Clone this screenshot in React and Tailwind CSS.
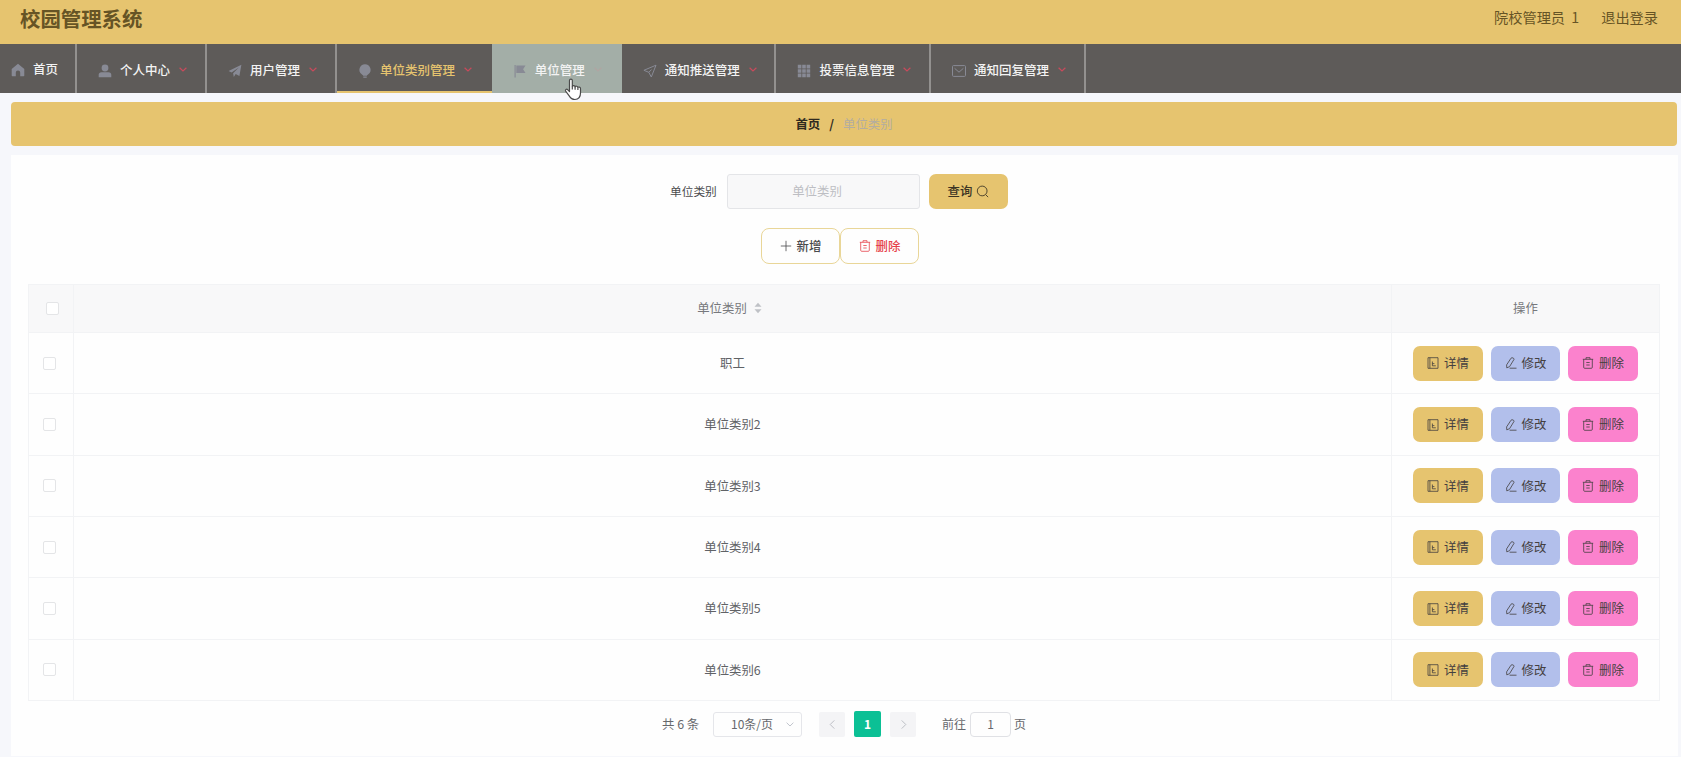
import React from "react";

const menus = [
  { name: "个人中心", icon: "user" },
  { name: "用户管理", icon: "plane" },
  { name: "单位类别管理", icon: "bulb", active: true },
  { name: "单位管理", icon: "flag", hover: true },
  { name: "通知推送管理", icon: "send" },
  { name: "投票信息管理", icon: "grid" },
  { name: "通知回复管理", icon: "mail" },
];

const rows = ["职工", "单位类别2", "单位类别3", "单位类别4", "单位类别5", "单位类别6"];

const NavIcon = ({ name }) => {
  const solid = { width: 14, height: 14, viewBox: "0 0 14 14", fill: "currentColor" };
  const line = {
    width: 14,
    height: 14,
    viewBox: "0 0 14 14",
    fill: "none",
    stroke: "currentColor",
    strokeWidth: 1,
    strokeLinejoin: "round",
  };

  switch (name) {
    case "home":
      return (
        <svg {...solid}>
          <path d="M7 .8 13.3 6v6.6a.7.7 0 0 1-.7.7H9.2V9.6a2.2 2.2 0 0 0-4.4 0v3.7H1.4a.7.7 0 0 1-.7-.7V6z" />
        </svg>
      );
    case "user":
      return (
        <svg {...solid}>
          <circle cx="7" cy="4" r="3.4" />
          <path d="M.7 13.2v-2.4c0-1.6 1-2.6 2.8-2.6h7c1.8 0 2.8 1 2.8 2.6v2.4z" />
        </svg>
      );
    case "plane":
      return (
        <svg {...solid}>
          <path d="M13.4.8 11.4 12 7.7 10 5.8 13 5.1 9.2 10.8 3.5 3.6 8.4.6 7.1z" />
        </svg>
      );
    case "bulb":
      return (
        <svg {...solid}>
          <path d="M7 .2a5.6 5.6 0 0 0-3.3 10.1c.8.6 1.3.8 1.3 1.5h4c0-.7.5-.9 1.3-1.5A5.6 5.6 0 0 0 7 .2zM5.3 12.5h3.4v1.3H5.3z" />
        </svg>
      );
    case "flag":
      return (
        <svg {...solid}>
          <path d="M1.5 1h1.2v12.5H1.5zM3.3 1.5h9.2l-2.4 3.7 2.4 3.7H3.3z" />
        </svg>
      );
    case "send":
      return (
        <svg {...line}>
          <path d="M13 1.2.9 6.3l4.9 2L8.3 13z" />
          <path d="M5.8 8.3 8.6 5.5" />
        </svg>
      );
    case "grid":
      return (
        <svg {...solid}>
          <path d="M.8.8h3.6v3.6H.8zM5.2.8h3.6v3.6H5.2zM9.6.8h3.6v3.6H9.6zM.8 5.2h3.6v3.6H.8zM5.2 5.2h3.6v3.6H5.2zM9.6 5.2h3.6v3.6H9.6zM.8 9.6h3.6v3.6H.8zM5.2 9.6h3.6v3.6H5.2zM9.6 9.6h3.6v3.6H9.6z" />
        </svg>
      );
    default:
      return (
        <svg {...line}>
          <rect x=".5" y="1.6" width="13" height="10.8" rx="1" />
          <path d="m2.6 4.3 4.4 3.9 4.4-3.9" />
        </svg>
      );
  }
};

const Icon = ({ size = 12, children }) => (
  <svg
    width={size}
    height={size}
    viewBox="0 0 12 12"
    fill="none"
    stroke="currentColor"
    strokeWidth=".8"
    className="shrink-0"
  >
    {children}
  </svg>
);

const Trash = () => (
  <Icon>
    <path d="M.8 2.3h10.4M1.7 2.3v8q0 1 1 1h6.6q1 0 1-1v-8M4 2.2V.7h4v1.5M4.3 5.5h3.4M4.3 8h3.4" />
  </Icon>
);

const Detail = () => (
  <Icon>
    <path d="M1 .7h10v10.6H1zM2.9.7v10.6M5.4 4.5v4.3h3.4M5.4 6.6h2" />
  </Icon>
);

const Pen = () => (
  <Icon>
    <path d="M6 1.2c.8-1 3.3-.2 3 1.2L4.600 9.600l-2.800 1.300-.2-3zM4.600 11.200h6.900" />
  </Icon>
);

const Checkbox = () => (
  <span className="block size-[13px] rounded-[2px] border border-[#e4e5e7] bg-white" />
);

const actionClass =
  "flex h-[35px] w-[69.5px] items-center justify-center gap-[5px] rounded-[7px] text-[12.4px] text-[#44403f]";

const Navbar = () => (
  <nav className="flex h-[49px] bg-[#5e5b59] text-[12.5px] font-medium text-[#f3f3f3]">
    <div className="flex w-[77px] items-center border-r-2 border-[#93918f] pl-[11px] pt-[1px]">
      <span className="mr-2 mt-[2px] text-[#888a95]">
        <NavIcon name="home" />
      </span>
      首页
    </div>
    {menus.map((m) => (
      <div
        key={m.name}
        className={`relative flex items-center pl-[21px] pt-[4px] ${
          m.name.length > 4 ? "w-[154.7px]" : "w-[130px]"
        } ${m.hover ? "bg-[#a3aea7]" : m.active ? "text-[#e6c46f]" : "border-r-2 border-[#93918f]"}`}
      >
        <span className="mr-2 text-[#888a95]">
          <NavIcon name={m.icon} />
        </span>
        <span className="whitespace-nowrap">{m.name}</span>
        <svg
          width="8"
          height="5"
          viewBox="0 0 8 5"
          fill="none"
          stroke={m.hover ? "#b0a5a2" : "#c94a5c"}
          strokeWidth="1.2"
          className="mb-[3px] ml-[9px] shrink-0"
        >
          <path d="m.6.7 3.4 3.3L7.4.7" />
        </svg>
        {m.active && <span className="absolute inset-x-0 bottom-0 h-[2px] bg-[#e6c46f]" />}
        {m.hover && (
          <svg
            width="19"
            height="23"
            viewBox="0 0 19 23"
            className="absolute left-[72px] top-[34px] z-10"
            fill="#fff"
            stroke="#4a4a4a"
            strokeWidth="1.2"
            strokeLinejoin="round"
          >
            <path d="M5.5 13.5V2.6c0-2 2.8-2 2.8 0v6c.3-1.3 2.6-1.2 2.8.3.4-1.1 2.6-.9 2.8.6.6-.9 2.6-.5 2.6 1.1v4.2c0 4-2.1 6.7-5.6 6.7-2.9 0-4.4-1.4-5.7-3.6L1.6 13.1c-.7-1.5 1-2.5 2.2-1.3z" />
            <path d="M8.3 8.6v3M11.1 9v2.8M13.9 9.6v2.4" fill="none" />
          </svg>
        )}
      </div>
    ))}
  </nav>
);

const SearchForm = () => (
  <div className="flex flex-col items-center">
    <div className="flex h-[35px] items-center pr-[11px]">
      <span className="w-[57px] pb-[2px] text-[11.7px] text-[#4b4b4d]">单位类别</span>
      <div className="mr-[9px] flex h-full w-[193px] items-center justify-center rounded-[3px] border border-[#e4e5e8] bg-[#f8f8f9] pr-[13px] text-[12.4px] text-[#bdbec3]">
        单位类别
      </div>
      <button className="flex h-full w-[79px] items-center justify-center gap-1 rounded-[7px] bg-[#e6c46f] text-[12.4px] font-medium text-[#3b3424]">
        查询
        <Icon size={13}>
          <circle cx="5.7" cy="5.5" r="4.5" />
          <path d="m9 9 2.2 2.2" />
        </Icon>
      </button>
    </div>
    <div className="mt-[19px] flex pr-[9px] text-[12.4px] font-medium">
      <button className="flex h-[36px] w-[79px] items-center justify-center gap-[5px] rounded-[8px] border border-[#e9d698] text-[#4a4a4c]">
        <Icon>
          <path d="M6 .8v10.4M.8 6h10.4" />
        </Icon>
        新增
      </button>
      <button className="flex h-[36px] w-[79px] items-center justify-center gap-[5px] rounded-[8px] border border-[#e9d698] text-[#e6414a]">
        <Trash />
        删除
      </button>
    </div>
  </div>
);

const Table = () => (
  <div className="mx-[17px] mt-[20px] w-[1632px] border-l border-t border-[#f2f3f5] text-[12.4px] text-[#606266]">
    <div className="grid h-[48px] grid-cols-[45px_1318px_268px] bg-[#f8f8f9] text-[#77787c]">
      <div className="flex items-center border-b border-r border-[#f2f3f5] pl-[17px]">
        <Checkbox />
      </div>
      <div className="flex items-center justify-center border-b border-r border-[#f2f3f5] pb-[1px] pl-[3px] pr-[9px]">
        单位类别
        <svg width="8" height="12" viewBox="0 0 8 12" fill="#bfc1c6" className="ml-[7px]">
          <path d="M4 .8 7.5 4.8H.5zM4 11.2.5 7.2h7z" />
        </svg>
      </div>
      <div className="flex items-center justify-center border-b border-r border-[#f2f3f5]">操作</div>
    </div>
    {rows.map((row) => (
      <div key={row} className="grid h-[61.35px] grid-cols-[45px_1318px_268px]">
        <div className="flex items-center border-b border-r border-[#f2f3f5] pl-[14px]">
          <Checkbox />
        </div>
        <div className="flex items-center justify-center border-b border-r border-[#f2f3f5]">{row}</div>
        <div className="flex items-center justify-center gap-[8px] border-b border-r border-[#f2f3f5]">
          <button className={`${actionClass} bg-[#e6c46f]`}>
            <Detail />
            详情
          </button>
          <button className={`${actionClass} bg-[#b2bfeb]`}>
            <Pen />
            修改
          </button>
          <button className={`${actionClass} bg-[#fb82cd]`}>
            <Trash />
            删除
          </button>
        </div>
      </div>
    ))}
  </div>
);

const Pagination = () => (
  <div className="mt-[10px] flex h-[26px] items-center pl-[651px] text-[12px] text-[#66686c]">
    <span className="w-[51px] whitespace-nowrap text-[12.4px]">共 6 条</span>
    <div className="mr-[17px] flex h-[25px] w-[89px] items-center justify-between rounded-[3px] border border-[#e5e6ea] pl-[17px] pr-[7px]">
      10条/页
      <svg width="8" height="5" viewBox="0 0 8 5" fill="none" stroke="#c0c4cc">
        <path d="m.6.7 3.4 3.3L7.4.7" />
      </svg>
    </div>
    <span className="flex h-[25px] w-[26px] items-center justify-center rounded-[2px] bg-[#f4f4f6] text-[#a9acb3]">
      <Icon size={11}>
        <path d="M8 1.5 3.5 6 8 10.5" />
      </Icon>
    </span>
    <span className="mx-[9px] flex h-[26px] w-[27px] items-center justify-center rounded-[2px] bg-[#0bc095] font-bold text-white">
      1
    </span>
    <span className="flex h-[25px] w-[26px] items-center justify-center rounded-[2px] bg-[#f4f4f6] text-[#a9acb3]">
      <Icon size={11}>
        <path d="M4 1.5 8.5 6 4 10.5" />
      </Icon>
    </span>
    <span className="ml-[26px] w-[28px]">前往</span>
    <span className="mr-[3px] flex h-[25px] w-[41px] items-center justify-center rounded-[4px] border border-[#e0e1e5]">
      1
    </span>
    页
  </div>
);

const App = () => {
  return (
    <div className="h-[757px] w-[1681px] overflow-hidden bg-[#f6f7fb] font-['Noto_Sans_CJK_SC',sans-serif]">
      <header className="flex h-[44px] items-center justify-between bg-[#e6c46f] pb-[8px] pl-[20px] pr-[23px] text-[#665425]">
        <h1 className="text-[20.4px] font-bold">校园管理系统</h1>
        <div className="flex gap-[22px] text-[14.2px]">
          <span>院校管理员&nbsp; 1</span>
          <span>退出登录</span>
        </div>
      </header>
      <Navbar />

      {/* breadcrumb */}
      <div className="ml-[11px] mt-[9px] flex h-[44px] w-[1666px] items-center justify-center gap-[9px] rounded-[4px] bg-[#e6c46f] text-[12.4px]">
        <span className="font-bold text-[#2f2a1f]">首页</span>
        <span className="font-bold text-[#2f2a1f]">/</span>
        <span className="text-[#b3ada0]">单位类别</span>
      </div>

      <main className="ml-[11px] mt-[9px] h-[601px] w-[1667px] bg-[#fefefe] pt-[19px]">
        <SearchForm />
        <Table />
        <Pagination />
      </main>
    </div>
  );
};

export default App;
